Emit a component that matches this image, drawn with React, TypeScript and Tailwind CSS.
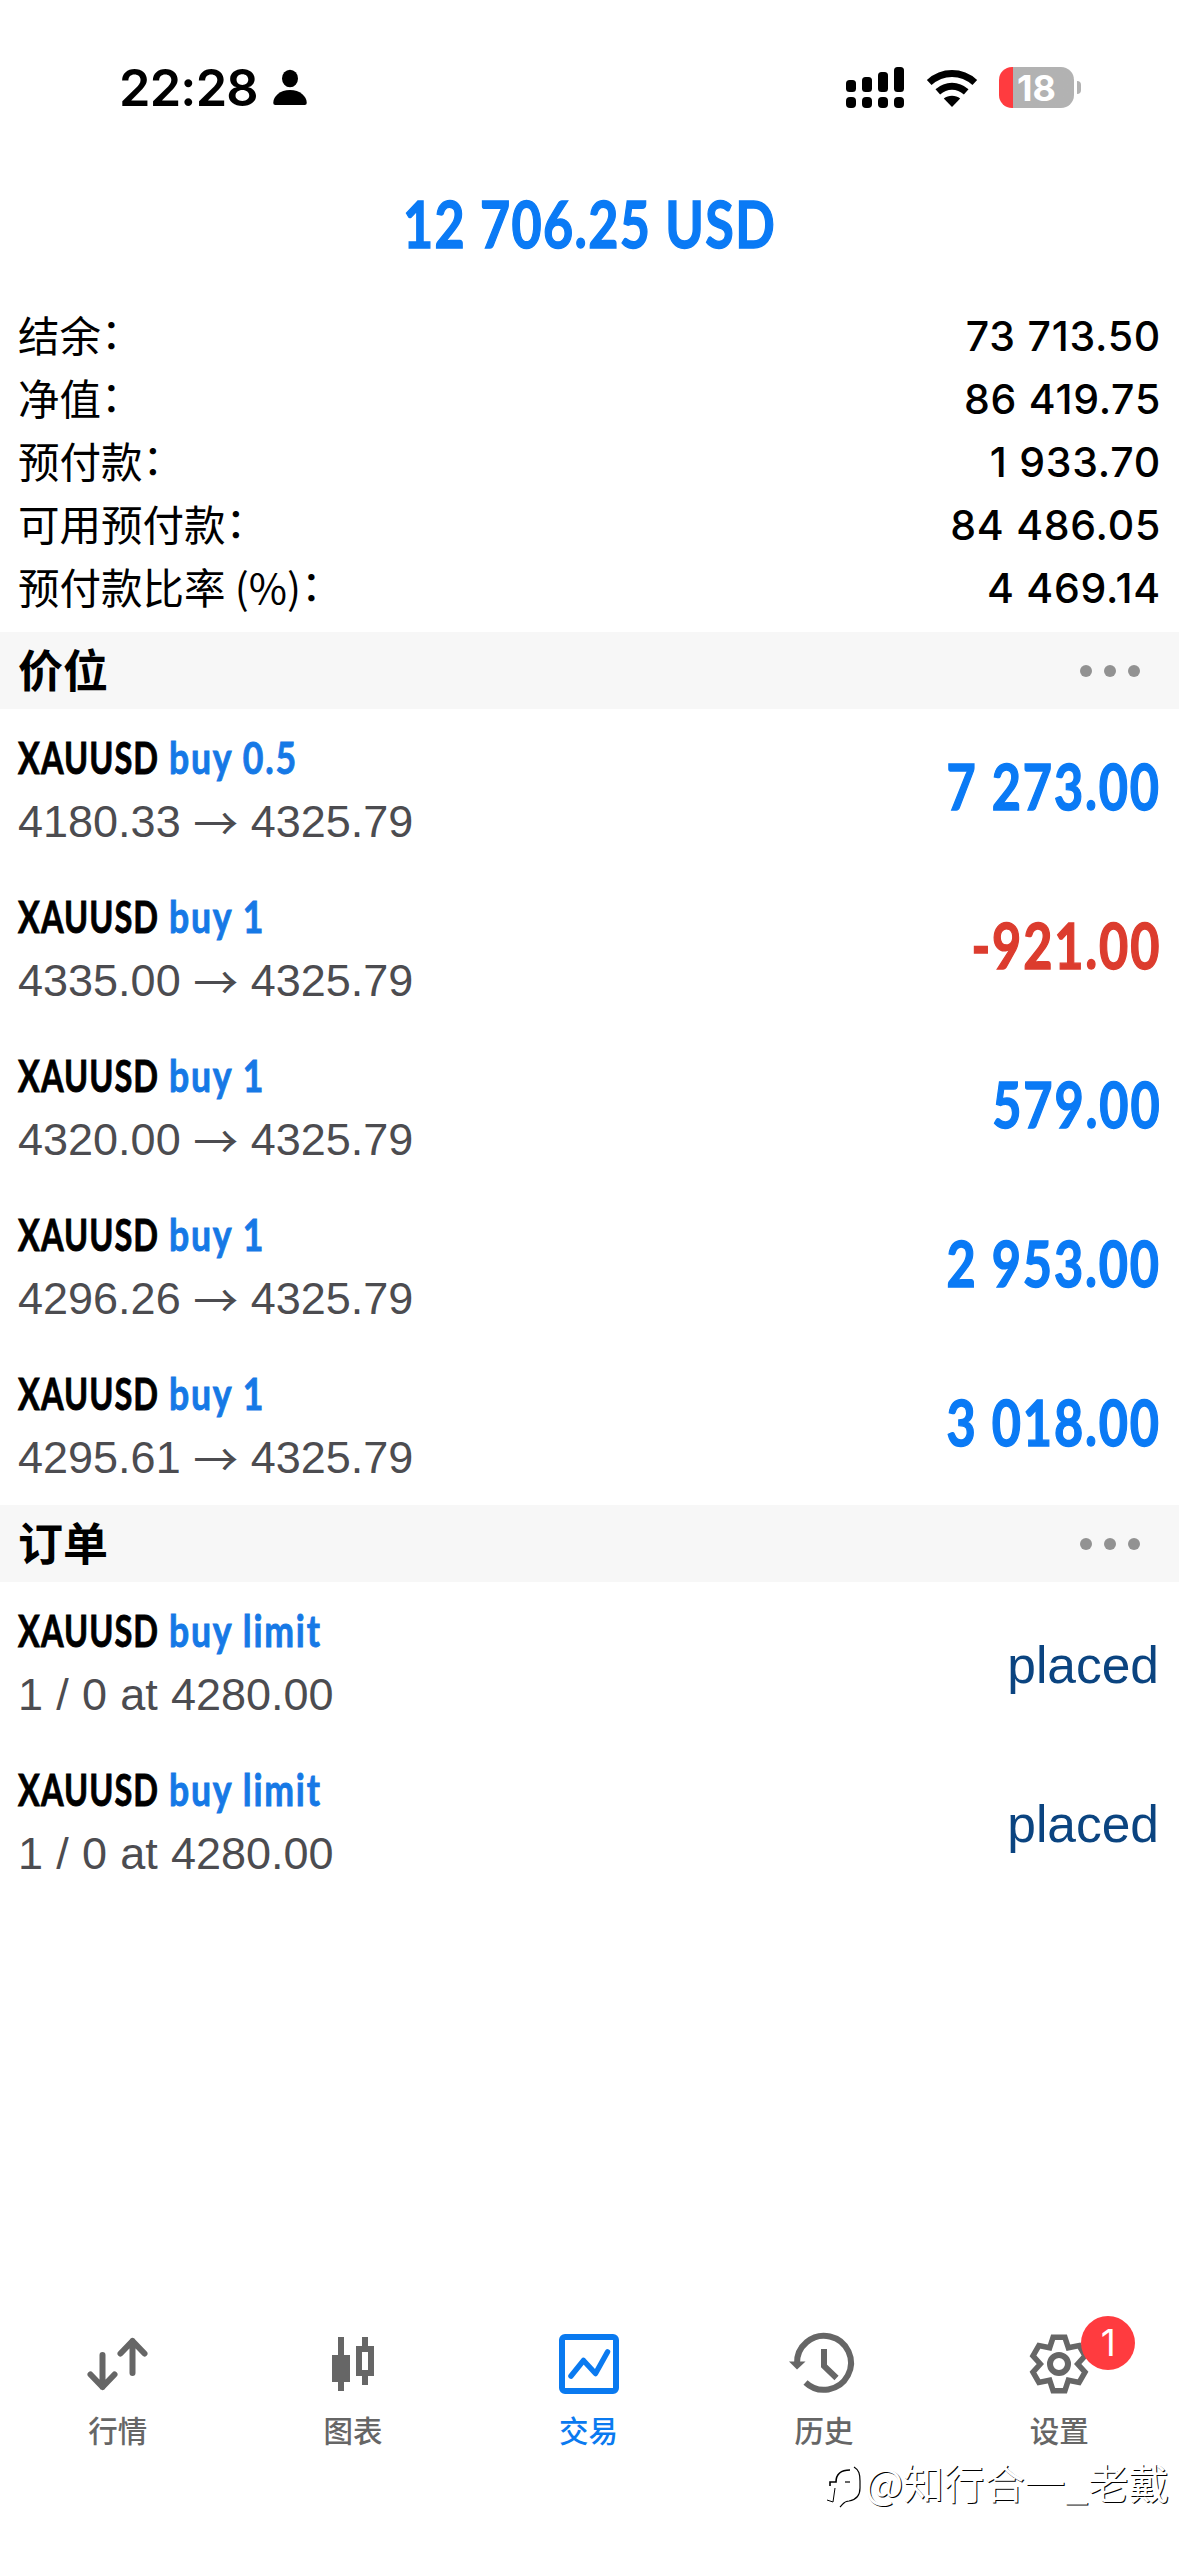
import React from "react";

type Position = { lot: string; open: string; profit: string; loss?: boolean };

const account = [
  { label: "结余", value: "73 713.50" },
  { label: "净值", value: "86 419.75" },
  { label: "预付款", value: "1 933.70" },
  { label: "可用预付款", value: "84 486.05" },
  { label: "预付款比率 (%)", value: "4 469.14" },
];

const positions: Position[] = [
  { lot: "0.5", open: "4180.33", profit: "7 273.00" },
  { lot: "1", open: "4335.00", profit: "-921.00", loss: true },
  { lot: "1", open: "4320.00", profit: "579.00" },
  { lot: "1", open: "4296.26", profit: "2 953.00" },
  { lot: "1", open: "4295.61", profit: "3 018.00" },
];

const orders = [
  { type: "buy limit", detail: "1 / 0 at 4280.00", state: "placed" },
  { type: "buy limit", detail: "1 / 0 at 4280.00", state: "placed" },
];

// six teeth, three points each: both tip corners and the valley after them
const gearPoints = Array.from({ length: 6 }, (_, i) =>
  [
    [27.3, -12.5],
    [27.3, 12.5],
    [18.7, 30],
  ].map(([r, a]) => {
    const t = ((a + i * 60) * Math.PI) / 180;
    return `${(36 + r * Math.sin(t)).toFixed(2)},${(36 - r * Math.cos(t)).toFixed(2)}`;
  })
)
  .flat()
  .join(" ");

const QuotesIcon = () => (
  <svg className="h-[72px] w-[72px]" viewBox="0 0 72 72" fill="none" stroke="currentColor" strokeWidth="6" strokeLinecap="round" strokeLinejoin="round">
    <path d="M20.5 27v32M8.5 46.500l12 12.500 12-12.500" />
    <path d="M50.500 45V13M38.500 25.500l12-12.500 12 12.500" />
  </svg>
);

const ChartIcon = () => (
  <svg className="h-[72px] w-[72px]" viewBox="0 0 72 72" fill="currentColor">
    <path d="M21 9h6v18h6v27h-6v9h-6v-9h-6V27h6z" />
    <path fillRule="evenodd" d="M45 9h6v9h6v30h-6v9h-6v-9h-6V18h6zM45 24v18h6V24z" />
  </svg>
);

const TradeIcon = () => (
  <svg className="h-[72px] w-[72px]" viewBox="0 0 72 72" fill="none" stroke="currentColor" strokeWidth="6">
    <rect x="9" y="9" width="54" height="54" rx="3" />
    <path d="M18 48l12.500-15.500L42.500 45.500 54.500 24" strokeWidth="5.500" strokeLinecap="round" strokeLinejoin="round" />
  </svg>
);

const HistoryIcon = () => (
  <svg className="h-[72px] w-[72px]" viewBox="0 0 72 72" fill="none" stroke="currentColor" strokeWidth="6">
    <path d="M9 36a27 27 0 1 1 8.500 18.500" />
    <path d="M36 21v17l12.500 12" />
    <path d="M1 33.500h16.500L9 41.500z" fill="currentColor" stroke="none" />
  </svg>
);

const SettingsIcon = () => (
  <svg className="h-[72px] w-[72px]" viewBox="0 0 72 72" fill="none" stroke="currentColor">
    <polygon points={gearPoints} strokeWidth="5.500" strokeLinejoin="miter" />
    <circle cx="36" cy="36" r="9" strokeWidth="6" />
  </svg>
);

const tabs = [
  { name: "行情", icon: <QuotesIcon /> },
  { name: "图表", icon: <ChartIcon /> },
  { name: "交易", icon: <TradeIcon />, active: true },
  { name: "历史", icon: <HistoryIcon /> },
  { name: "设置", icon: <SettingsIcon />, badge: "1" },
];

const StatusBar: React.FC = () => (
  <div className="flex h-[176px] items-start justify-between pl-[119px] pr-[98px] pt-[62px]">
    <div className="flex h-[50px] items-center">
      <span className="w-[154px] pt-[2px] font-['Inter'] text-[50.500px] font-[600] leading-[50px] tracking-[-0.800px]">22:28</span>
      <svg className="h-[36px] w-[34px]" viewBox="0 0 34 36">
        <ellipse cx="17" cy="9.500" rx="8" ry="8.700" />
        <path d="M2.500 36C1 36 .3 35.300 .3 33.500 .3 27.500 7 21 17 21s16.700 6.500 16.700 12.500c0 1.800-.700 2.500-2.200 2.500z" />
      </svg>
    </div>
    <div className="flex h-[51px] items-center">
      <svg className="h-[42px] w-[58px]" viewBox="0 0 58 42">
        <rect x="0" y="13" width="10" height="12" rx="3.500" />
        <rect x="16" y="10" width="10" height="15" rx="3.500" />
        <rect x="32" y="5" width="10" height="20" rx="3.500" />
        <rect x="48" y="0" width="10" height="25" rx="3.500" />
        <rect x="0" y="30" width="10" height="11" rx="4" />
        <rect x="16" y="30" width="10" height="11" rx="4" />
        <rect x="32" y="30" width="10" height="11" rx="4" />
        <rect x="48" y="30" width="10" height="11" rx="4" />
      </svg>
      <svg className="ml-[22px] h-[38px] w-[52px]" viewBox="0 0 52 38" fill="none" stroke="#000">
        <path d="M3.200 13.500C16.500 1.500 35.500 1.500 48.800 13.500" strokeWidth="7" />
        <path d="M11.800 22.800c8.500-7.500 19.900-7.500 28.400 0" strokeWidth="7" />
        <path d="M26 38l-8.200-8.500c4.500-3.800 11.900-3.800 16.400 0z" fill="#000" stroke="none" />
      </svg>
      <div className="ml-[21px] flex h-[41px] w-[75px] items-center justify-center overflow-hidden rounded-[13px] bg-linear-to-r from-[#ff3b3f] from-[19%] to-[#b2b2b2] to-[19%]">
        <span className="font-['Inter'] text-[36px] font-[700] leading-none text-white">18</span>
      </div>
      <div className="ml-[3px] h-[13px] w-[4px] rounded-r-full bg-[#b2b2b2]" />
    </div>
  </div>
);

const SectionHeader: React.FC<{ title: string }> = ({ title }) => (
  <div className="flex h-[77px] items-center justify-between bg-[#f7f7f7] pl-[18px] pr-[39px]">
    <h2 className="pb-[4px] font-['Noto_Sans_CJK_SC',sans-serif] text-[45px] font-[700] leading-none">{title}</h2>
    <div className="flex gap-3">
      <span className="h-3 w-3 rounded-full bg-[#929292]" />
      <span className="h-3 w-3 rounded-full bg-[#929292]" />
      <span className="h-3 w-3 rounded-full bg-[#929292]" />
    </div>
  </div>
);

const Row: React.FC<{ type: string; detail: React.ReactNode; children: React.ReactNode }> = ({ type, detail, children }) => (
  <div className="flex h-[159px] items-center justify-between pl-[18px] pr-[20px]">
    <div className="flex flex-col pt-[3px]">
      <p className="flex h-[64px] items-center whitespace-nowrap pb-[2px] font-['Lato'] text-[44.500px] font-[700]">
        <span className="w-[151px] origin-left scale-x-[0.730] tracking-[1.500px] [-webkit-text-stroke:0.900px]">XAUUSD</span>
        <span className="origin-left scale-x-[0.800] tracking-[2.200px] text-[#1679e6] [-webkit-text-stroke:0.900px]">{type}</span>
      </p>
      <p className="flex h-[64px] items-center whitespace-pre font-['Liberation_Sans'] text-[45px] text-[#4c4c50]">{detail}</p>
    </div>
    {children}
  </div>
);

const App: React.FC = () => {
  return (
    <main className="relative flex h-[2556px] w-[1179px] flex-col overflow-hidden bg-white text-black">
      <StatusBar />
      <h1 className="flex h-[129px] origin-center scale-x-[0.800] justify-center whitespace-nowrap font-['Lato'] text-[65px] font-[700] leading-[95px] tracking-[1.700px] text-[#0a7af5] [-webkit-text-stroke:1.400px]">12 706.25 USD</h1>
      <div className="flex h-[327px] flex-col pl-[18px] pr-[18px]">
        {account.map((item) => (
          <div key={item.label} className="flex h-[63px] items-center justify-between">
            <span className="flex pb-[4px] font-['Noto_Sans_CJK_SC',sans-serif] text-[41.500px] leading-none">
              {item.label}
              <span className="-mt-[3px]">：</span>
            </span>
            <span className="font-['Inter'] text-[41px] font-[500] leading-none tracking-[0.750px]">{item.value}</span>
          </div>
        ))}
      </div>

      <SectionHeader title="价位" />
      {positions.map((p) => (
        <Row
          key={p.open}
          type={`buy ${p.lot}`}
          detail={
            <>
              {p.open} <span className="font-['Noto_Sans_CJK_SC',sans-serif] leading-[44px]">→</span> 4325.79
            </>
          }
        >
          <span className={`-mr-[2px] origin-right scale-x-[0.800] whitespace-nowrap pb-[5px] font-['Lato'] text-[63px] font-[700] tracking-[2.300px] [-webkit-text-stroke:1.400px] ${p.loss ? "text-[#dc3c2e]" : "text-[#0a7af5]"}`}>{p.profit}</span>
        </Row>
      ))}

      <div className="h-px" />
      <SectionHeader title="订单" />
      {orders.map((o, i) => (
        <Row key={i} type={o.type} detail={<span className="[word-spacing:0.700px]">{o.detail}</span>}>
          <span className="pt-[8px] font-['Liberation_Sans'] text-[51.500px] text-[#0b4480]">{o.state}</span>
        </Row>
      ))}

      <nav className="mt-auto flex h-[228px] pr-[2px]">
        {tabs.map((tab) => (
          <div key={tab.name} className={`flex flex-1 flex-col items-center ${tab.active ? "text-[#0a7af0]" : "text-[#666666]"}`}>
            <div className="relative">
              {tab.icon}
              {tab.badge && (
                <span className="absolute left-[58px] top-[-12px] flex h-[54px] w-[54px] items-center justify-center rounded-full bg-[#ff3b3f] font-['Inter'] text-[37px] text-white">{tab.badge}</span>
              )}
            </div>
            <span className="mt-[14px] font-['Noto_Sans_CJK_SC',sans-serif] text-[29.500px] font-[500] leading-[30px]">{tab.name}</span>
          </div>
        ))}
      </nav>

      {/* author signature over the bottom corner */}
      <div className="absolute bottom-[48px] right-[10px] flex items-center text-white">
        <svg className="mr-[4px] mt-[10px] h-[42px] w-[36px]" viewBox="0 0 36 42" fill="none" stroke="#000">
          <path d="M2 34l6 2 2-14" strokeWidth="1" />
          <path d="M5 20v-4h6c0-8 5-12 14-12" strokeWidth="1.600" />
          <path d="M29 1c5 3 6 7 6 14v7c0 8-5 12-11 13-5 0-5 2-9 6" strokeWidth="1.200" />
          <path d="M20 16h5" strokeWidth="1.200" />
        </svg>
        <span className="whitespace-nowrap font-['Noto_Sans_CJK_SC',sans-serif] text-[40.500px] font-[400] leading-[50px] [text-shadow:1px_1px_0_#000]">@知行合一_老戴</span>
      </div>
    </main>
  );
};

export default App;
